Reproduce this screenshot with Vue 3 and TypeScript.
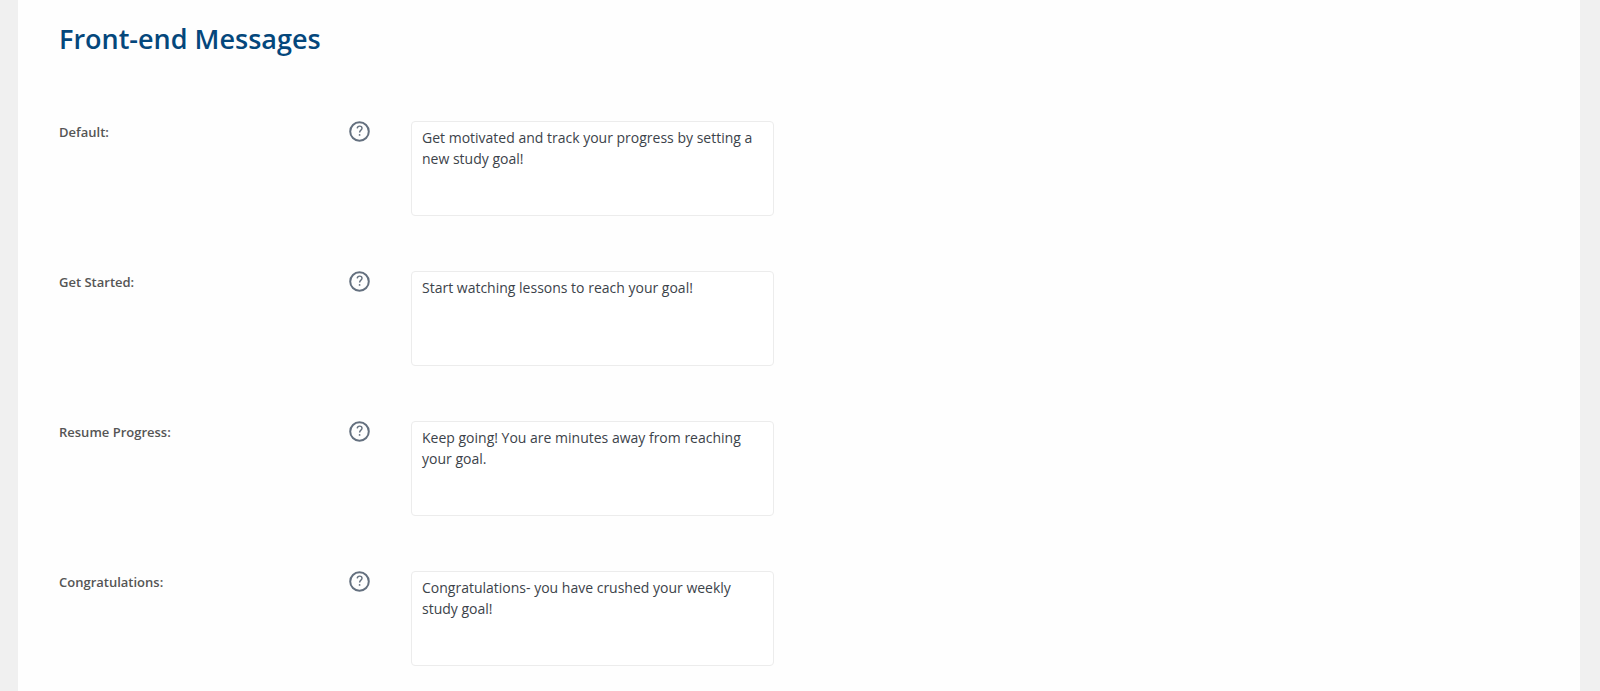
<script setup lang="ts">
import { ref } from 'vue'

interface MessageField {
  id: string
  label: string
  value: string
}

const fields = ref<MessageField[]>([
  { id: 'default', label: 'Default:', value: 'Get motivated and track your progress by setting a new study goal!' },
  { id: 'get-started', label: 'Get Started:', value: 'Start watching lessons to reach your goal!' },
  { id: 'resume-progress', label: 'Resume Progress:', value: 'Keep going! You are minutes away from reaching your goal.' },
  { id: 'congratulations', label: 'Congratulations:', value: 'Congratulations- you have crushed your weekly study goal!' },
])
</script>

<template>
  <main class="panel">
    <h1 class="title">Front-end Messages</h1>
    <form class="fields" @submit.prevent>
      <div v-for="field in fields" :key="field.id" class="row">
        <label class="label" :for="field.id">{{ field.label }}</label>
        <button type="button" class="help" :aria-label="`Help for ${field.label}`">
          <svg class="help-icon" viewBox="0 0 21 21" aria-hidden="true">
            <circle cx="10.500" cy="10.500" r="9.300" />
            <path d="M8.200 7.300c.2-1.500 1.100-2.200 2.400-2.200 1.400 0 2.400.8 2.400 2.100 0 1.900-2.400 2-2.400 4.300" />
            <circle class="dot" cx="10.600" cy="13.900" r=".9" />
          </svg>
        </button>
        <textarea :id="field.id" v-model="field.value" class="message"></textarea>
      </div>
    </form>
  </main>
</template>

<style>
body {
  margin: 0;
  background: #f0f0f0;
}
</style>

<style scoped>
.panel {
  box-sizing: border-box;
  min-height: 100vh;
  margin: 0 20px 0 18px;
  padding: 19px 41px 24px;
  background: #fefefe;
  font-family: "Segoe UI", "Open Sans", "Noto Sans", sans-serif;
}

.title {
  margin: 0;
  color: #04477c;
  font-size: 27px;
  font-weight: 600;
  line-height: 40px;
}

.fields {
  display: flex;
  flex-direction: column;
  gap: 55px;
  margin-top: 62px;
}

.row {
  display: grid;
  grid-template-columns: 249px 21px minmax(0, 363px);
  column-gap: 41px;
  align-items: start;
}

.label {
  color: #555;
  font-size: 13px;
  font-weight: 600;
  line-height: 22px;
}

.help {
  display: flex;
  width: 21px;
  height: 21px;
  padding: 0;
  border: 0;
  background: none;
  cursor: pointer;
}

.help-icon {
  width: 21px;
  height: 21px;
  fill: none;
  stroke: #64707f;
  stroke-width: 2;
}

.help-icon path {
  stroke-width: 1.4;
}

.help-icon .dot {
  fill: #64707f;
  stroke: none;
}

.message {
  box-sizing: border-box;
  width: 100%;
  height: 95px;
  padding: 5px 10px;
  border: 1px solid #ececec;
  border-radius: 4px;
  background: #fff;
  color: #3c434a;
  font-family: inherit;
  font-size: 14px;
  line-height: 21px;
  resize: none;
}
</style>
